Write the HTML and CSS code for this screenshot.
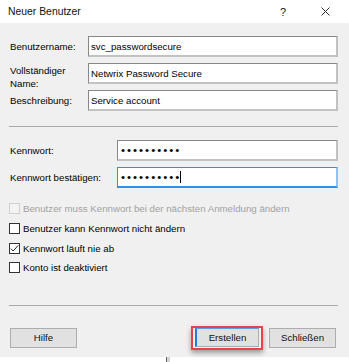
FILE: index.html
```html
<!DOCTYPE html><html><head>
    <meta name="viewport" content="width=device-width, initial-scale=1">
    <title>Neuer Benutzer</title>
    <link rel="stylesheet" href="styles.css">
  </head><body>
    <div class="window">
      <div class="titlebar">
        <span class="title">Neuer Benutzer</span>
        <span class="help">?</span>
        <svg class="close" width="9" height="9" viewBox="0 0 9 9"><path d="M0.5 0.5L8.5 8.5M8.5 0.5L0.5 8.5" stroke="#333" stroke-width="1"/></svg>
      </div>
      <div class="dialog">
        <div class="fields">
          <span class="lbl">Benutzername:</span><div class="field">svc_passwordsecure</div>
          <span class="lbl lbl-top">Vollständiger Name:</span><div class="field">Netwrix Password Secure</div>
          <span class="lbl">Beschreibung:</span><div class="field">Service account</div>
        </div>
        <div class="sep"></div>
        <div class="fields fields-pw">
          <span class="lbl">Kennwort:</span><div class="field"><span class="dots">••••••••••</span></div>
          <span class="lbl">Kennwort bestätigen:</span><div class="field focus"><span class="dots">••••••••••</span><span class="caret"></span></div>
        </div>
        <div class="checks">
          <div class="check disabled"><span class="box"></span>Benutzer muss Kennwort bei der nächsten Anmeldung ändern</div>
          <div class="check"><span class="box"></span>Benutzer kann Kennwort nicht ändern</div>
          <div class="check"><span class="box"><svg width="9" height="9" viewBox="0 0 9 9"><path d="M0.8 4.6L3.2 7L8.2 1.4" fill="none" stroke="#222" stroke-width="1"/></svg></span>Kennwort läuft nie ab</div>
          <div class="check"><span class="box"></span>Konto ist deaktiviert</div>
        </div>
        <div class="sep sep-low"></div>
        <div class="buttons">
          <button class="btn">Hilfe</button>
          <span class="mark"><button class="btn btn-default">Erstellen</button></span>
          <button class="btn btn-close">Schließen</button>
        </div>
      </div>
      <div class="strip"><span class="cursor"></span></div>
    </div>
  </body></html>
```

FILE: styles.css
```css
body {margin: 0; font-family: "Liberation Sans", Arial, sans-serif; font-size: 9.7px; color: #000; background: #fff;}
.window {width: 349px; height: 362px; overflow: hidden;}

.titlebar {display: flex; align-items: center; height: 23px; background: #fff; padding-left: 8px;}
.title {font-size: 10.4px; color: #111;}
.help {width: 10px; margin-left: auto; text-align: center; font-size: 11px; color: #222;}
.close {margin-left: 33px; margin-right: 19px;}

.dialog {background: #f0f0f0; height: 334px; box-sizing: border-box; padding: 13px 11px 0 9px;}

.fields {display: grid; grid-template-columns: 79px 1fr; grid-auto-rows: 21px; row-gap: 6px; align-items: center;}
.fields-pw {grid-template-columns: 108px 1fr; margin-top: 13px;}
.lbl {padding-left: 1px; line-height: 13px;}
.lbl-top {align-self: start; margin-top: 1px;}
.field {display: flex; align-items: center; height: 21px; box-sizing: border-box; background: #fff; padding-left: 2px;
  border-style: solid; border-width: 1px 2px 2px 1px; border-color: #878787 #c2c2c2 #c2c2c2 #878787;}
.field.focus {border-color: #3190e5 #8dc1f1 #3190e5 #3190e5;}
.dots {font-size: 11.5px; letter-spacing: 2px; padding-left: 1px;}
.caret {width: 1px; height: 12px; background: #000; margin-left: -1px;}

.sep {height: 1px; background: #a9a9a9; margin-top: 15px;}
.sep-low {margin-top: 27px;}

.checks {margin-top: 11px;}
.check {display: flex; align-items: center; height: 19.7px;}
.box {display: flex; align-items: center; justify-content: center; width: 11px; height: 11px; box-sizing: border-box;
  border: 1px solid #333; background: #fff; margin-right: 3px;}
.check.disabled {color: #a2a2a2;}
.check.disabled .box {border-color: #cfcfcf; background: #f3f3f3;}

.buttons {display: flex; align-items: center; margin-top: 20px; padding-left: 1px;}
.btn {font-family: inherit; font-size: 9.7px; color: #111; width: 67px; height: 20px; padding: 0; background: #e1e1e1; border: 1px solid #adadad;}
.mark {display: flex; margin-left: auto; padding: 0 2px 1px 2px; border: 2px solid #e8424c; box-shadow: 0 3px 5px rgba(0,0,0,.35);}
.btn-default {width: 64px; height: 19px; border-color: #5a9fe2 #adadad #adadad #2a7ad5; border-left-width: 2px;}
.btn-close {margin-left: 6px; margin-right: 2px;}

.strip {height: 5px; background: #fff; padding-left: 166px;}
.cursor {display: block; width: 4px; height: 5px; box-sizing: border-box; border-left: 1px solid #666; background: #d4d4d4;}
```
